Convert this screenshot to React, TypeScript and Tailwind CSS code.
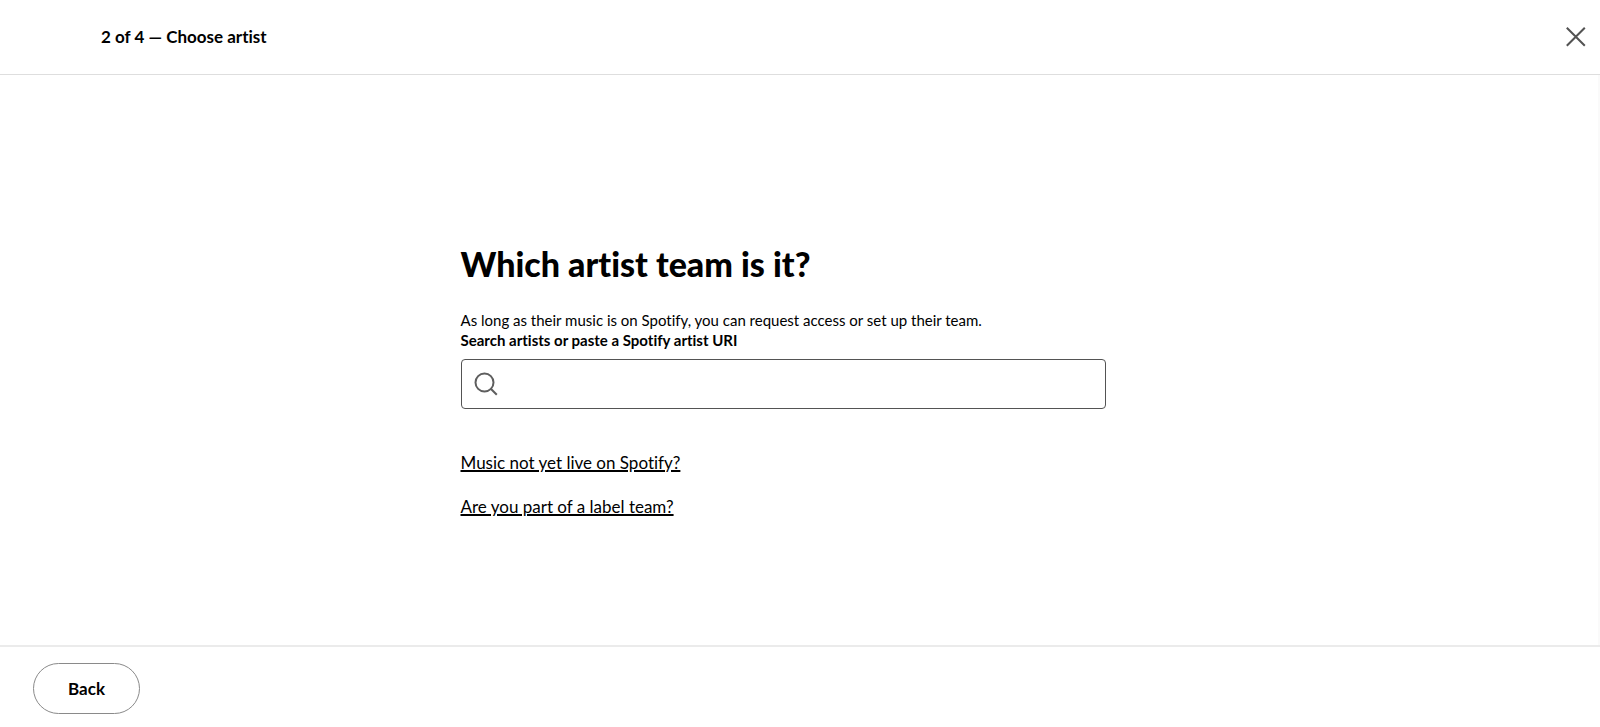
export default function App() {
  return (
    <div className="flex min-h-screen flex-col bg-white font-['Lato','Liberation_Sans',sans-serif] text-black [font-variant-ligatures:none]">
      <header className="flex h-[75px] items-center justify-between border-b border-[#dedede] pr-3 pl-[101px]">
        <p className="text-[17px] leading-6 font-bold">2 of 4 — Choose artist</p>
        <button type="button" aria-label="Close" className="flex size-6 items-center justify-center text-[#535353]">
          <svg viewBox="0 0 20 20" className="size-5" fill="none" stroke="currentColor" strokeWidth="2" aria-hidden="true">
            <path d="M.8.8 18.8 18.8M18.8.8.8 18.8" />
          </svg>
        </button>
      </header>

      <main className="flex grow flex-col items-center justify-center border-r-2 border-[#fafafa] pt-[42px] pr-8">
        <div className="w-full max-w-[645px]">
          <h1 className="mb-[26px] text-[34px] leading-10 font-black">Which artist team is it?</h1>
          <p className="text-[15px] leading-5">
            As long as their music is on Spotify, you can request access or set up their team.
          </p>
          <label htmlFor="artist" className="block text-[15px] leading-5 font-bold">
            Search artists or paste a Spotify artist URI
          </label>
          <div className="mt-[9px] flex h-[50px] items-center gap-3 rounded border border-[#535353] pr-3 pl-3">
            <svg viewBox="0 0 24 24" className="size-6 shrink-0 text-[#5e5e5e]" fill="none" stroke="currentColor" strokeWidth="2" aria-hidden="true">
              <circle cx="10.5" cy="10.5" r="9" />
              <path d="m16.8 16.8 6 6" />
            </svg>
            <input id="artist" type="text" className="h-full min-w-0 grow bg-transparent text-base outline-none" />
          </div>
          <div className="mt-[42px] flex flex-col items-start gap-5">
            <a href="#not-live" className="text-[17px] leading-6 underline decoration-2">Music not yet live on Spotify?</a>
            <a href="#label-team" className="text-[17px] leading-6 underline decoration-2">Are you part of a label team?</a>
          </div>
        </div>
      </main>

      <footer className="border-t-2 border-[#ebebeb] px-[33px] pt-4 pb-[13px]">
        <button type="button" className="h-[51px] rounded-full border border-[#8a8a8a] px-[34px] text-[17px] font-bold">
          Back
        </button>
      </footer>
    </div>
  );
}
